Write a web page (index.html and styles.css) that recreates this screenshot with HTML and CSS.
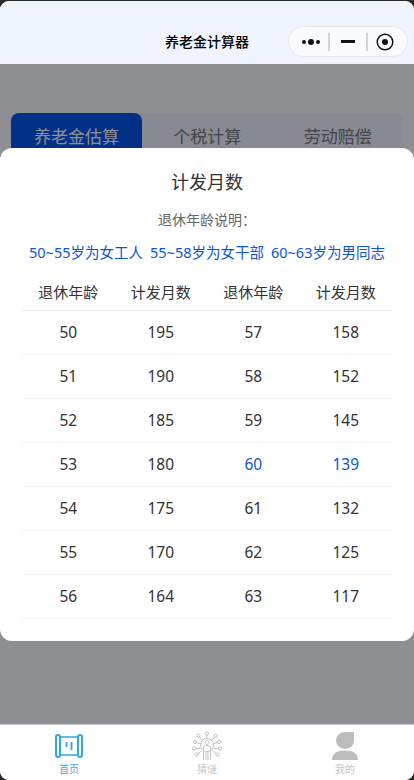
FILE: index.html
```html
<!DOCTYPE html>
<html lang="zh-CN">
<head>
    <meta charset="UTF-8">
    <meta name="viewport" content="width=device-width, initial-scale=1.0">
    <title>养老金计算器</title>
    <link rel="stylesheet" href="styles.css">
</head>
<body>
    <div class="app">
        <header class="nav">
            <h1 class="nav-title">养老金计算器</h1>
            <div class="capsule">
                <svg class="cap-more" width="18" height="10" viewBox="0 0 18 10"><circle cx="2" cy="5" r="2" fill="#111"/><circle cx="9" cy="5" r="3" fill="#111"/><circle cx="16" cy="5" r="2" fill="#111"/></svg>
                <span class="cap-line"></span>
                <span class="cap-minus"></span>
                <span class="cap-line"></span>
                <svg class="cap-record" width="18" height="18" viewBox="0 0 18 18"><circle cx="9" cy="9" r="7.8" fill="none" stroke="#111" stroke-width="1.5"/><circle cx="9" cy="9" r="3" fill="#111"/></svg>
            </div>
        </header>

        <main class="content">
            <div class="tabs">
                <div class="tab active">养老金估算</div>
                <div class="tab">个税计算</div>
                <div class="tab">劳动赔偿</div>
            </div>
        </main>

        <div class="mask"></div>

        <section class="modal">
            <h2 class="modal-title">计发月数</h2>
            <p class="modal-sub">退休年龄说明：</p>
            <p class="modal-note">
                <span>50~55岁为女工人</span>
                <span>55~58岁为女干部</span>
                <span>60~63岁为男同志</span>
            </p>
            <table class="months">
                <thead>
                    <tr><th>退休年龄</th><th>计发月数</th><th>退休年龄</th><th>计发月数</th></tr>
                </thead>
                <tbody>
                    <tr><td>50</td><td>195</td><td>57</td><td>158</td></tr>
                    <tr><td>51</td><td>190</td><td>58</td><td>152</td></tr>
                    <tr><td>52</td><td>185</td><td>59</td><td>145</td></tr>
                    <tr><td>53</td><td>180</td><td class="hl">60</td><td class="hl">139</td></tr>
                    <tr><td>54</td><td>175</td><td>61</td><td>132</td></tr>
                    <tr><td>55</td><td>170</td><td>62</td><td>125</td></tr>
                    <tr><td>56</td><td>164</td><td>63</td><td>117</td></tr>
                </tbody>
            </table>
        </section>

        <footer class="tabbar">
            <div class="bar-item on">
                <svg width="28" height="30" viewBox="0 0 28 30"><rect x="4" y="6" width="20" height="18" fill="none" stroke="#2ea7e8" stroke-width="1.5"/><rect x="1" y="4" width="4" height="22" rx="2" fill="#fff" stroke="#2ea7e8" stroke-width="2"/><rect x="23" y="4" width="4" height="22" rx="2" fill="#fff" stroke="#2ea7e8" stroke-width="2"/><path d="M11.500 11v5M16.500 11v8" stroke="#2ea7e8" stroke-width="1.800" fill="none"/></svg>
                <span>首页</span>
            </div>
            <div class="bar-item">
                <svg width="30" height="30" viewBox="0 0 30 30" fill="none" stroke="#bcbcbc" stroke-width="0.9">
                    <circle cx="15" cy="2.500" r="1.600"/><circle cx="6.500" cy="4.800" r="1.600"/><circle cx="23.500" cy="4.800" r="1.600"/><circle cx="3" cy="11" r="1.600"/><circle cx="27" cy="11" r="1.600"/><circle cx="2" cy="17.500" r="1.600"/><circle cx="28" cy="17.500" r="1.600"/><circle cx="4.500" cy="23.500" r="1.600"/><circle cx="25.500" cy="23.500" r="1.600"/>
                    <path d="M15 4v4M7.500 6l3.500 4M22.500 6l-3.500 4M4.500 11.500l4.500 1.500M25.500 11.500l-4.500 1.500M3.500 17.500h5M26.500 17.500h-5M6 22.500l3.500-2.500M24 22.500l-3.500-2.500"/>
                    <circle cx="15" cy="14" r="6.500"/>
                    <circle cx="15" cy="11.500" r="2"/>
                    <path d="M11.500 29V16.500q0-2 2-2h3q2 0 2 2V29M14 29v-8M16 29v-8"/>
                </svg>
                <span>猜谜</span>
            </div>
            <div class="bar-item">
                <svg width="28" height="30" viewBox="0 0 28 30"><path d="M14 1h9v8.500a9 8.500 0 1 1-9-8.500z" fill="#bdbdbd"/><path d="M1 29c0-6.500 5-9.500 13-9.500s13 3 13 9.500z" fill="#bdbdbd"/></svg>
                <span>我的</span>
            </div>
        </footer>
    </div>
</body>
</html>
```

FILE: styles.css
```css
*,
*::after,
*::before{
    padding: 0;
    margin: 0;
    box-sizing: border-box;
}
html,body{
    width: 414px;
    height: 780px;
    overflow: hidden;
    background: #2b2b2b;
}
body{
    padding-top: 1px;
    font-family: "Noto Sans", "Noto Sans CJK SC", sans-serif;
}
.app{
    position: relative;
    width: 414px;
    height: 779px;
    display: flex;
    flex-direction: column;
    overflow: hidden;
    border-radius: 9px;
    background: #fff;
}
.nav{
    height: 63px;
    padding: 25px 6px 0 0;
    background: #eff4fe;
    display: flex;
    justify-content: flex-end;
    align-items: flex-start;
    flex-shrink: 0;
}
.nav-title{
    font-size: 14px;
    font-weight: 500;
    line-height: 32px;
    color: #000;
    margin-right: 39px;
}
.capsule{
    width: 120px;
    height: 31px;
    display: flex;
    align-items: center;
    padding-left: 13px;
    border: 1px solid #e6e8ee;
    border-radius: 16px;
    background: #f9fbff;
}
.cap-line{
    width: 2px;
    height: 18px;
    background: #d2d3d6;
}
.cap-more{
    margin-right: 8px;
}
.cap-minus{
    width: 14px;
    height: 3px;
    margin: 0 11px;
    background: #111;
}
.cap-record{
    margin-left: 8px;
}
.content{
    flex: 1;
    padding: 49px 11px 0;
    background: #fff;
}
.tabs{
    display: flex;
    height: 60px;
    border-radius: 8px;
    background: #f4f5fd;
}
.tab{
    flex: 1;
    padding-top: 9px;
    text-align: center;
    font-size: 17px;
    line-height: 30px;
    color: #777;
}
.tab.active{
    flex: none;
    width: 131px;
    border-radius: 8px 8px 0 0;
    background: #0052e9;
    color: #fff;
}
.mask{
    position: absolute;
    top: 63px;
    left: 0;
    right: 0;
    bottom: 56px;
    background: rgba(4, 7, 16, 0.45);
}
.modal{
    position: absolute;
    top: 147px;
    left: 0;
    width: 414px;
    height: 493px;
    padding: 0 22px;
    border-radius: 12px;
    background: #fff;
    text-align: center;
}
.modal-title{
    margin-top: 19px;
    font-size: 18px;
    font-weight: 400;
    line-height: 30px;
    color: #333;
}
.modal-sub{
    margin-top: 13px;
    font-size: 14px;
    line-height: 20px;
    color: #666;
}
.modal-note{
    margin-top: 12px;
    font-size: 14.5px;
    line-height: 20px;
    color: #0a55d9;
    white-space: nowrap;
    display: flex;
    justify-content: center;
    gap: 7px;
}
.months{
    width: 370px;
    margin-top: 12px;
    border-collapse: collapse;
    table-layout: fixed;
    color: #333;
    font-size: 15px;
}
.months th{
    height: 36px;
    font-weight: 400;
    border-bottom: 1px solid #ebedf0;
}
.months td{
    height: 44px;
    font-size: 15.5px;
    border-bottom: 1px solid #f2f3f5;
}
.months .hl{
    color: #0a55d9;
}
.tabbar{
    height: 56px;
    flex-shrink: 0;
    display: flex;
    position: relative;
    border-top: 1px solid #c8c8cc;
    background: #fff;
}
.bar-item{
    flex: 1;
    display: flex;
    flex-direction: column;
    align-items: center;
    padding-top: 6px;
    font-size: 10px;
    color: #c4c4c4;
}
.bar-item span{
    line-height: 14px;
    margin-top: 1px;
}
.bar-item.on{
    color: #42a8f0;
}
```
